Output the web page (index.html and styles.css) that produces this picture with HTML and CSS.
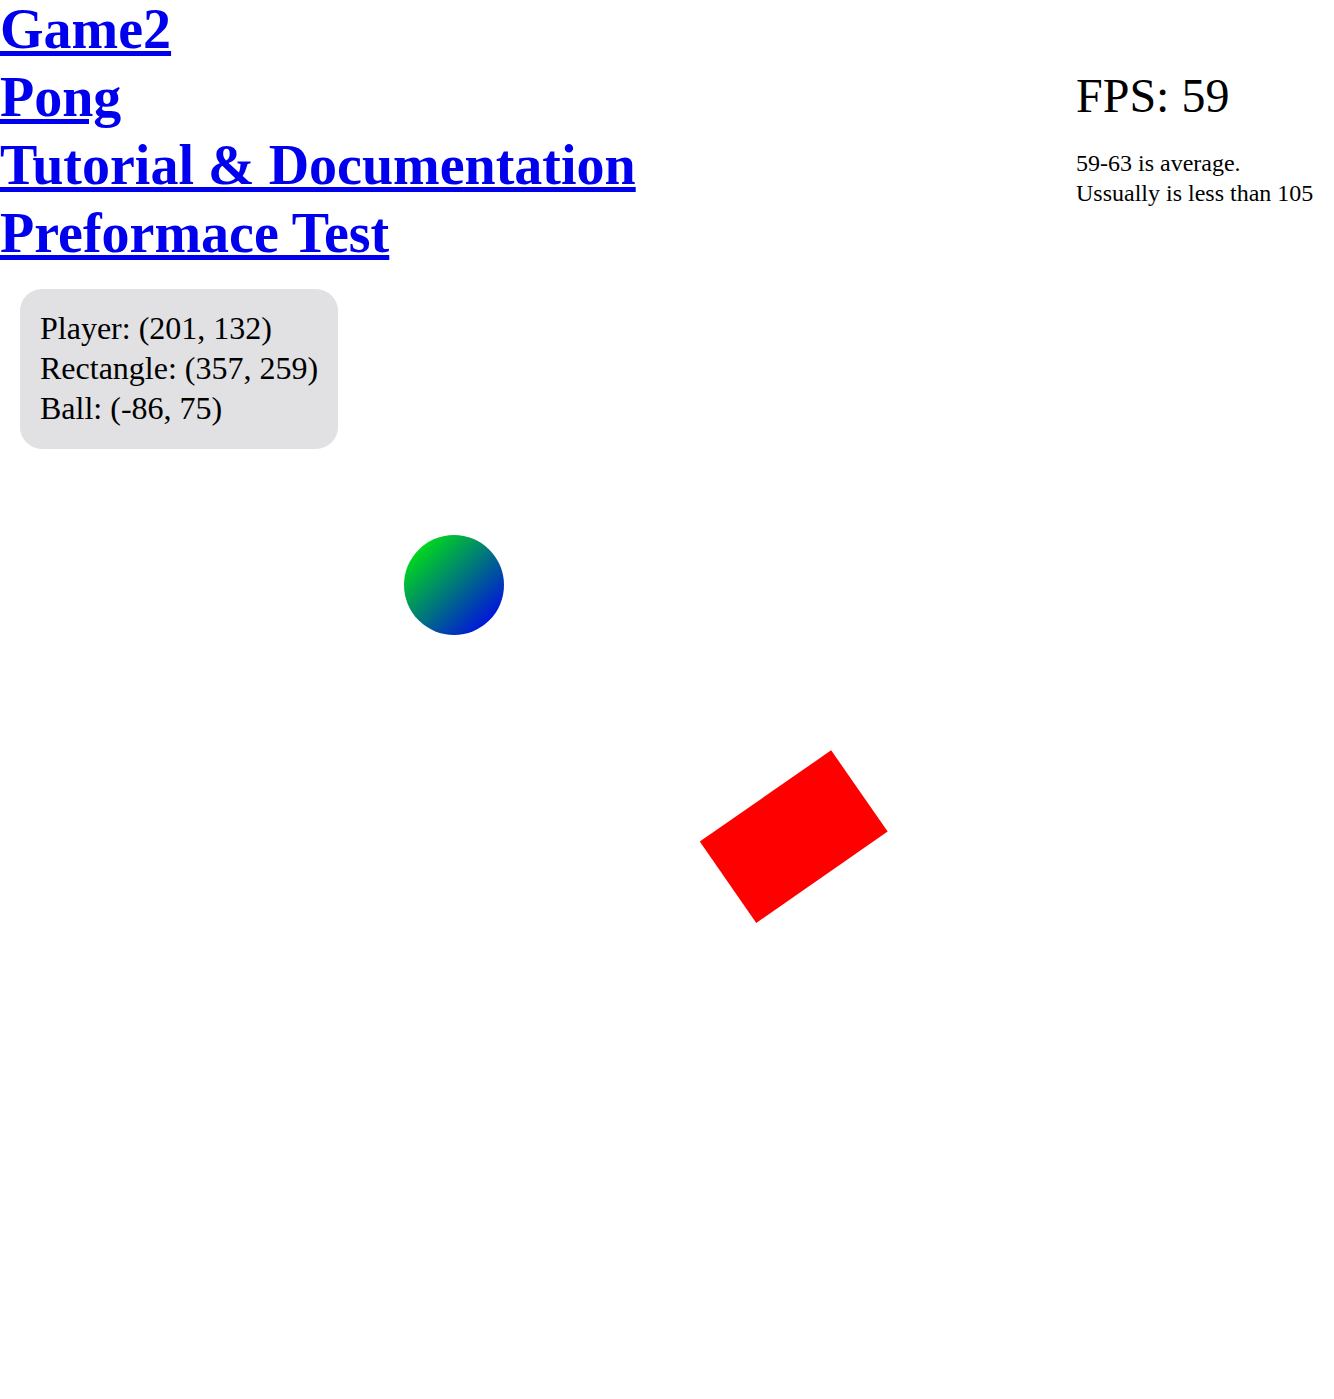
FILE: index.html
```html
<!DOCTYPE html>
<html>
<head>
<meta charset="utf-8">
<link rel="stylesheet" href="styles.css">
</head>
<body>
<nav class="links">
  <a href="#">Game2</a>
  <a href="#">Pong</a>
  <a href="#">Tutorial &amp; Documentation</a>
  <a href="#">Preformace Test</a>
</nav>
<div class="info">
  <div>Player: (201, 132)</div>
  <div>Rectangle: (357, 259)</div>
  <div>Ball: (-86, 75)</div>
</div>
<div class="fps">
  <div class="fps-value">FPS: 59</div>
  <div class="fps-note">59-63 is average.<br>Ussually is less than 105</div>
</div>
<svg class="stage" width="1334" height="1399" viewBox="0 0 1334 1399">
  <defs>
    <linearGradient id="ballGrad" x1="0" y1="0" x2="1" y2="1">
      <stop offset="0.15" stop-color="#00d61f"/>
      <stop offset="0.85" stop-color="#0018d8"/>
    </linearGradient>
  </defs>
  <circle cx="454" cy="585" r="50" fill="url(#ballGrad)"/>
  <rect x="-80" y="-50" width="160" height="99" fill="#ff0000" transform="translate(794 837) rotate(-34.8)"/>
</svg>
</body>
</html>
```
FILE: styles.css
```css
html, body {
  margin: 0;
  padding: 0;
  background: #ffffff;
}
body {
  font-family: "Liberation Serif", "Times New Roman", serif;
  color: #000;
  position: relative;
  min-height: 1399px;
}
.links {
  display: flex;
  flex-direction: column;
  align-items: flex-start;
  margin-top: -5px;
}
.links a {
  font-size: 56px;
  line-height: 68px;
  font-weight: bold;
  color: #0000ee;
  text-decoration: underline;
}
.info {
  display: inline-block;
  margin: 22px 0 0 20px;
  padding: 19px 20px 21px;
  background: #e1e1e3;
  border-radius: 22px;
  font-size: 32px;
  line-height: 40px;
}
.fps {
  position: absolute;
  top: 64px;
  left: 1076px;
}
.fps-value {
  font-size: 48px;
  line-height: 64px;
}
.fps-note {
  margin-top: 20px;
  font-size: 24px;
  line-height: 30px;
}
.stage {
  position: absolute;
  top: 0;
  left: 0;
  pointer-events: none;
}
```
